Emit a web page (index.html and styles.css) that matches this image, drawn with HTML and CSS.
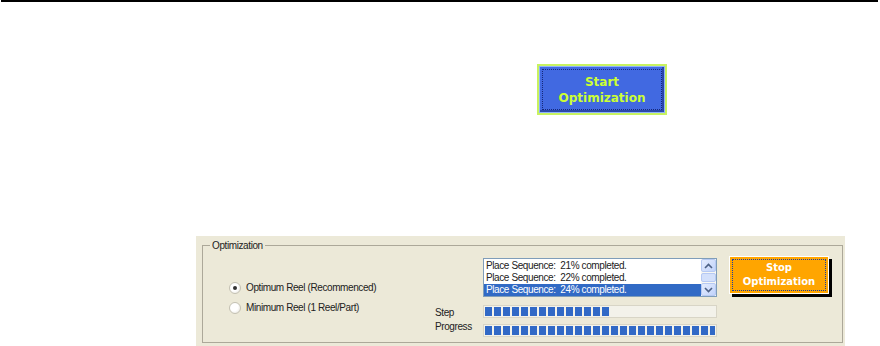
FILE: index.html
```html
<!DOCTYPE html>
<html lang="en">
<head>
    <meta charset="UTF-8">
    <meta name="viewport" content="width=device-width, initial-scale=1.0">
    <title>Optimization</title>
    <link rel="stylesheet" href="styles.css">
</head>
<body>
    <div class="rule"></div>

    <div class="start-row">
        <button class="start-btn">Start<br>Optimization</button>
    </div>

    <!-- Optimization panel -->
    <div class="panel">
        <div class="group">
            <span class="group-title">Optimization</span>

            <div class="options">
                <label class="option"><span class="radio checked"></span>Optimum Reel (Recommenced)</label>
                <label class="option"><span class="radio"></span>Minimum Reel (1 Reel/Part)</label>
            </div>

            <div class="monitor">
                <div></div>
                <div class="listbox">
                    <ul class="log">
                        <li>Place Sequence:&nbsp; 21% completed.</li>
                        <li>Place Sequence:&nbsp; 22% completed.</li>
                        <li class="selected">Place Sequence:&nbsp; 24% completed.</li>
                    </ul>
                    <div class="scrollbar">
                        <span class="sb-btn">
                            <svg width="9" height="6" viewBox="0 0 9 6"><path d="M1 5 L4.5 1.5 L8 5" fill="none" stroke="#4d6185" stroke-width="1.6"/></svg>
                        </span>
                        <span class="sb-thumb"></span>
                        <span class="sb-btn">
                            <svg width="9" height="6" viewBox="0 0 9 6"><path d="M1 1 L4.5 4.5 L8 1" fill="none" stroke="#4d6185" stroke-width="1.6"/></svg>
                        </span>
                    </div>
                </div>
                <span class="bar-label step">Step</span>
                <div class="progress step-bar"><div class="fill" style="width: 54%"></div></div>
                <span class="bar-label total">Progress</span>
                <div class="progress total-bar"><div class="fill" style="width: 100%"></div></div>
            </div>

            <button class="stop-btn">Stop<br>Optimization</button>
        </div>
    </div>
</body>
</html>
```

FILE: styles.css
```css
body {
    margin: 0;
    background-color: #fff;
    font-family: "Liberation Sans", Arial, sans-serif;
    color: #222;
}
.rule {
    height: 2px;
    background-color: #000;
    margin: 0 2px 0 1px;
}
.start-row {
    padding: 62px 0 0 537px;
}
.start-btn {
    display: block;
    width: 130px;
    height: 51px;
    padding: 0;
    background-color: #4169e1;
    border: 2px solid #c8f260;
    box-shadow: inset 0 0 0 1px #8fb0ff, inset -1px -1px 0 2px #2a47a8;
    outline: 1px dotted #16287a;
    outline-offset: -6px;
    color: #ccff33;
    font-family: "DejaVu Sans", Verdana, sans-serif;
    font-weight: bold;
    font-size: 12px;
    line-height: 16px;
    cursor: pointer;
}
.panel {
    box-sizing: border-box;
    margin: 121px 0 0 196px;
    width: 649px;
    height: 110px;
    padding: 9px 2px 3px 6px;
    background-color: #ece9d8;
}
.group {
    position: relative;
    box-sizing: border-box;
    height: 98px;
    border: 1px solid #aca899;
    padding-top: 12px;
    display: flex;
    align-items: flex-start;
    font-size: 10px;
    letter-spacing: -0.4px;
}
.group-title {
    position: absolute;
    top: -7px;
    left: 7px;
    padding: 0 2px;
    line-height: 13px;
    background-color: #ece9d8;
}
.options {
    box-sizing: border-box;
    width: 232px;
    padding: 23px 0 0 26px;
}
.option {
    display: flex;
    align-items: center;
    height: 13px;
}
.option + .option {
    margin-top: 7px;
}
.radio {
    position: relative;
    box-sizing: border-box;
    width: 12px;
    height: 12px;
    margin-right: 5px;
    border: 1px solid #c4c1b3;
    border-radius: 50%;
    background: radial-gradient(circle at 40% 40%, #fff 0 45%, #e2e0d6 100%);
}
.radio.checked::after {
    content: "";
    position: absolute;
    left: 3px;
    top: 3px;
    width: 4px;
    height: 4px;
    border-radius: 50%;
    background-color: #333;
}
.monitor {
    display: grid;
    grid-template-columns: 48px 234px;
}
.listbox {
    box-sizing: border-box;
    height: 39px;
    border: 1px solid #7f9db9;
    background-color: #fff;
    display: flex;
}
.log {
    flex: 1;
    list-style: none;
    margin: 0;
    padding: 1px 0 0 0;
}
.log li {
    height: 12px;
    line-height: 12px;
    padding-left: 2px;
    white-space: nowrap;
}
.log li.selected {
    background-color: #316ac5;
    color: #fff;
}
.scrollbar {
    width: 15px;
    display: flex;
    flex-direction: column;
    background-color: #f7f7f2;
}
.sb-btn {
    height: 13px;
    display: flex;
    align-items: center;
    justify-content: center;
    border: 1px solid #b6c9f3;
    border-radius: 2px;
    background: linear-gradient(135deg, #e4ecfd, #c1d3fb);
    box-sizing: border-box;
}
.sb-thumb {
    flex: 1;
    margin: 1px 0;
    border: 1px solid #b6c9f3;
    border-radius: 2px;
    background-color: #d3e0fb;
}
.bar-label {
    line-height: 11px;
}
.bar-label.step {
    margin-top: 10px;
}
.bar-label.total {
    margin-top: 3px;
}
.progress {
    box-sizing: border-box;
    height: 13px;
    padding: 1px;
    border: 1px solid #d8d5c6;
    background-color: #f3f2ea;
}
.step-bar {
    margin-top: 8px;
}
.total-bar {
    margin-top: 6px;
}
.fill {
    height: 100%;
    background: repeating-linear-gradient(90deg, #3169c6 0 7px, transparent 7px 9px);
}
.stop-btn {
    width: 100px;
    height: 38px;
    margin: -2px 0 0 12px;
    padding: 0;
    background-color: #ffa500;
    border: 1px solid #fff;
    box-shadow: 3px 3px 0 #000;
    outline: 1px dotted #1a3ea0;
    outline-offset: -4px;
    color: #fff;
    font-family: "DejaVu Sans", Verdana, sans-serif;
    font-weight: bold;
    font-size: 10px;
    line-height: 14px;
    letter-spacing: 0;
    cursor: pointer;
}
```
